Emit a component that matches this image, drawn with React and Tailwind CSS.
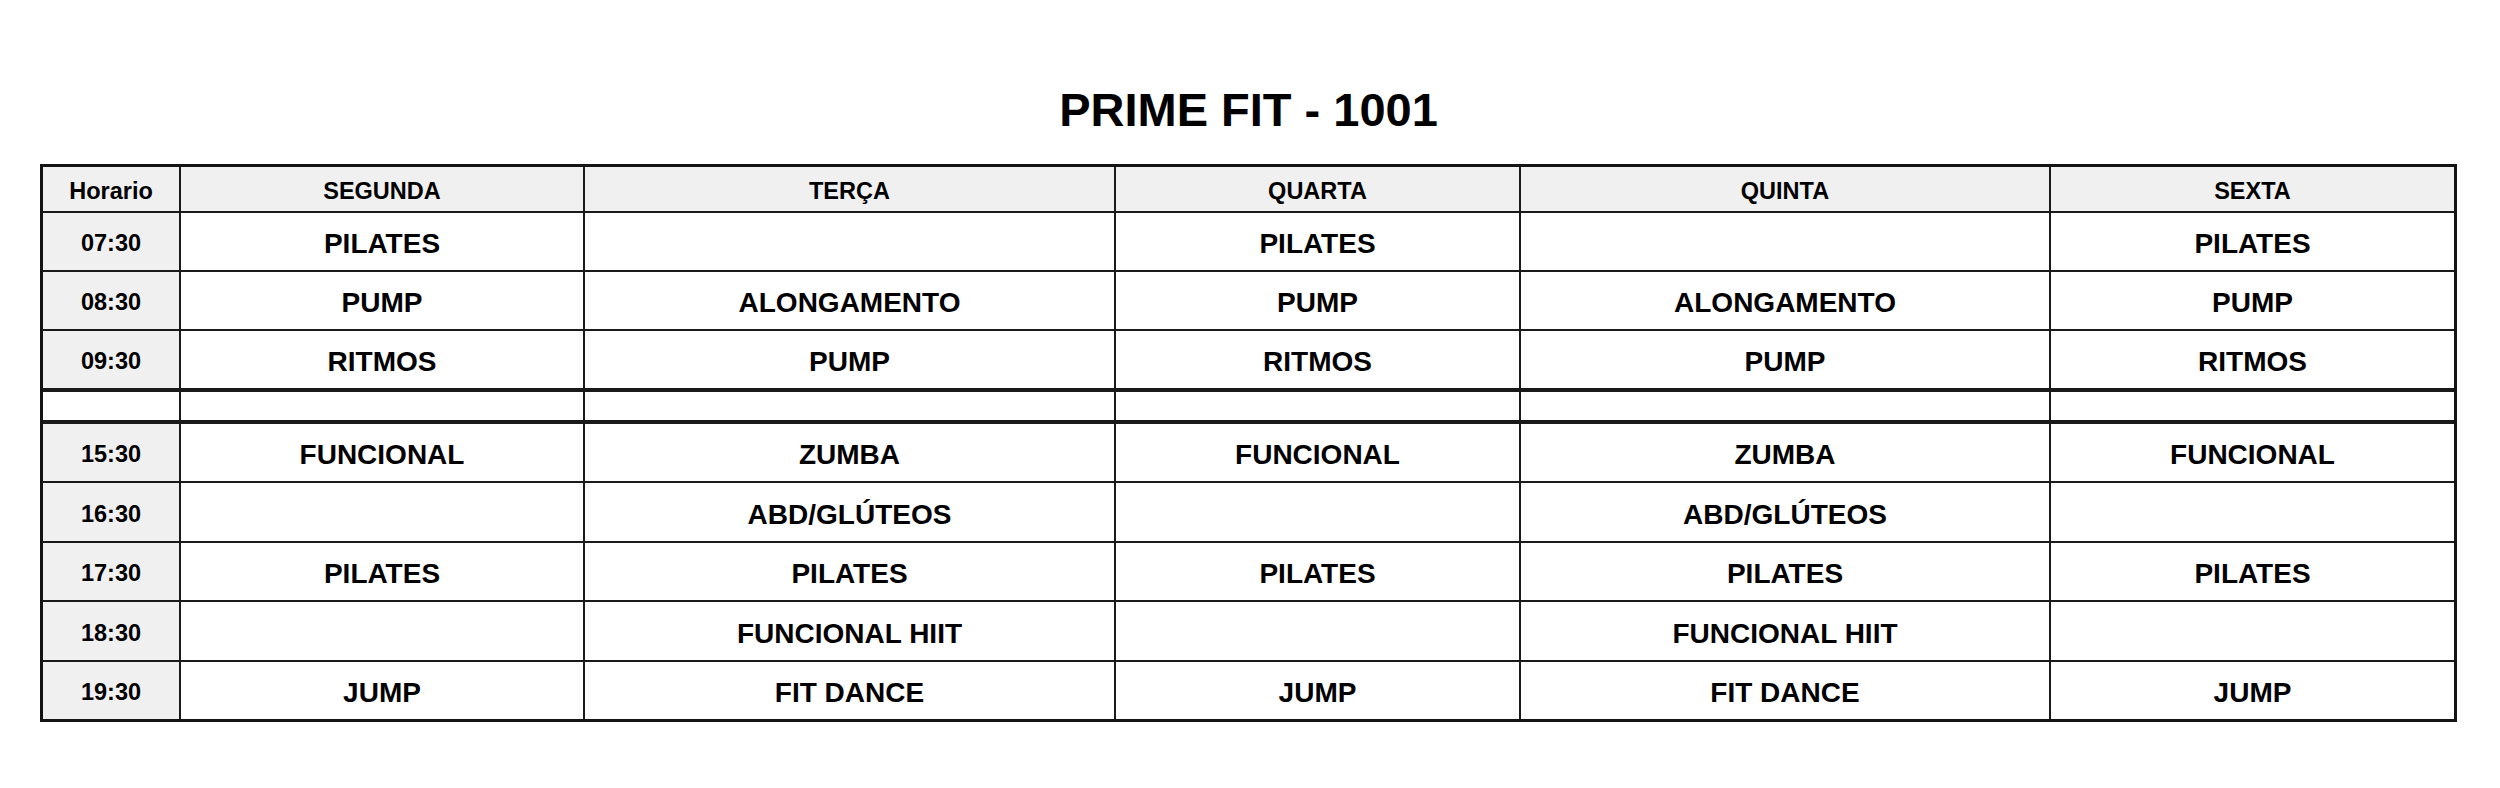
import React from 'react';

const days = ['SEGUNDA', 'TERÇA', 'QUARTA', 'QUINTA', 'SEXTA'];

const morning = [
  { time: '07:30', h: 'h-[57px]', classes: ['PILATES', '', 'PILATES', '', 'PILATES'] },
  { time: '08:30', h: 'h-[57px]', classes: ['PUMP', 'ALONGAMENTO', 'PUMP', 'ALONGAMENTO', 'PUMP'] },
  { time: '09:30', h: 'h-[57px]', classes: ['RITMOS', 'PUMP', 'RITMOS', 'PUMP', 'RITMOS'] },
];

const afternoon = [
  { time: '15:30', h: 'h-[57px]', classes: ['FUNCIONAL', 'ZUMBA', 'FUNCIONAL', 'ZUMBA', 'FUNCIONAL'] },
  { time: '16:30', h: 'h-[58px]', classes: ['', 'ABD/GLÚTEOS', '', 'ABD/GLÚTEOS', ''] },
  { time: '17:30', h: 'h-[57px]', classes: ['PILATES', 'PILATES', 'PILATES', 'PILATES', 'PILATES'] },
  { time: '18:30', h: 'h-[58px]', classes: ['', 'FUNCIONAL HIIT', '', 'FUNCIONAL HIIT', ''] },
  { time: '19:30', h: 'h-[57px]', classes: ['JUMP', 'FIT DANCE', 'JUMP', 'FIT DANCE', 'JUMP'] },
];

const cols = 'grid grid-cols-[136px_402px_529px_403px_528px_403px] gap-[2px]';

const Row = ({ row }) => (
  <div className={`${cols} ${row.h}`}>
    <div className="bg-[#f0f0f0] flex items-center justify-center pt-[5px] text-[23.5px] font-bold">
      {row.time}
    </div>
    {row.classes.map((c, i) => (
      <div key={i} className="bg-white flex items-center justify-center pt-[5px] text-[28px] font-bold">
        {c}
      </div>
    ))}
  </div>
);

export default function App() {
  return (
    <div
      className="min-h-screen bg-white text-black px-[40px] pt-[86px]"
      style={{ fontFamily: '"Liberation Sans", Arial, sans-serif' }}
    >
      <div className="w-[2417px]">
        <h1 className="text-center text-[47px] leading-none font-bold mb-[31px]">PRIME FIT - 1001</h1>

        <div className="border-[3px] border-[#141414] bg-[#1a1a1a] flex flex-col gap-[2px]">
          {/* cabeçalho */}
          <div className={`${cols} h-[44px]`}>
            <div className="bg-[#f0f0f0] flex items-center justify-center pt-[5px] text-[23.5px] font-bold">Horario</div>
            {days.map(d => (
              <div key={d} className="bg-[#f0f0f0] flex items-center justify-center pt-[5px] text-[23.5px] font-bold">
                {d}
              </div>
            ))}
          </div>

          {morning.map(r => <Row key={r.time} row={r} />)}

          {/* intervalo */}
          <div className={`${cols} h-[28px] my-[2px]`}>
            {Array.from({ length: 6 }).map((_, i) => (
              <div key={i} className="bg-white" />
            ))}
          </div>

          {afternoon.map(r => <Row key={r.time} row={r} />)}
        </div>
      </div>
    </div>
  );
}
